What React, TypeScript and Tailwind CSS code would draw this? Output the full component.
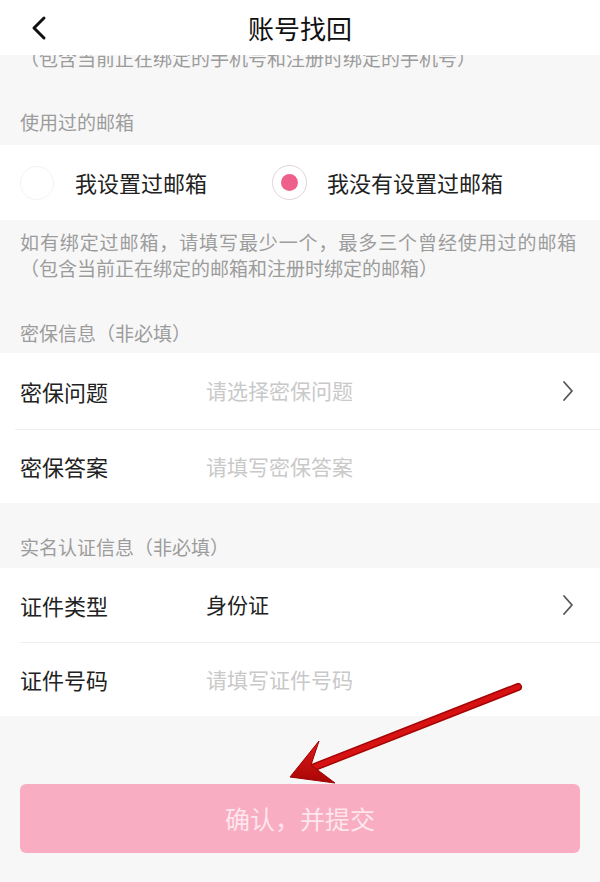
import React from "react";

const font = "font-['Noto_Sans_CJK_SC','Noto_Sans',sans-serif]";

const Chevron = () => (
  <svg width="12" height="22" viewBox="0 0 12 22" fill="none">
    <path d="M2 2 L10 11 L2 20" stroke="#555" strokeWidth="1.8" strokeLinecap="round" strokeLinejoin="round" />
  </svg>
);

const Row = ({ label, value, placeholder, arrow }: { label: string; value?: string; placeholder?: string; arrow?: boolean }) => (
  <div className="flex h-full items-center px-[20px]">
    <span className="w-[186px] text-[22px] text-[#222]">{label}</span>
    {value ? (
      <span className="flex-1 text-[21px] text-[#222]">{value}</span>
    ) : (
      <span className="flex-1 text-[21px] text-[#c9c9c9]">{placeholder}</span>
    )}
    {arrow && (
      <span className="mr-[6px] flex items-center">
        <Chevron />
      </span>
    )}
  </div>
);

const Heading = ({ children }: { children: React.ReactNode }) => (
  <div className="text-[19px] leading-[26px] text-[#9c9c9c]">{children}</div>
);

export default function App() {
  return (
    <div className={`relative h-[882px] w-[600px] overflow-hidden bg-[#f7f7f7] ${font}`}>
      {/* header */}
      <div className="relative z-10 grid h-[55px] grid-cols-[80px_1fr_80px] items-center bg-white">
        <div className="flex items-center pl-[30px]">
          <svg width="18" height="26" viewBox="0 0 18 26" fill="none">
            <path d="M14 3 L4 13 L14 23" stroke="#111" strokeWidth="3" strokeLinecap="round" strokeLinejoin="round" />
          </svg>
        </div>
        <div className="text-center text-[26px] text-[#111]">账号找回</div>
        <div />
      </div>

      {/* scrolled content: previous hint line is partly hidden under the header */}
      <div className="h-[90px] overflow-hidden px-[20px]">
        <div className="-mt-[10px] text-[19px] leading-[26px] text-[#9c9c9c]">
          （包含当前正在绑定的手机号和注册时绑定的手机号）
        </div>
        <div className="mt-[38px]">
          <Heading>使用过的邮箱</Heading>
        </div>
      </div>

      <div className="flex h-[75px] items-center bg-white px-[20px]">
        <div className="flex w-[252px] items-center gap-[21px]">
          <span className="h-[34px] w-[34px] rounded-full border border-[#f3f3f3]" />
          <span className="text-[22px] text-[#222]">我设置过邮箱</span>
        </div>
        <div className="flex items-center gap-[20px]">
          <span className="flex h-[35px] w-[35px] items-center justify-center rounded-full border border-[#e2d4d8]">
            <span className="h-[17px] w-[17px] rounded-full bg-[#ef5f8c]" />
          </span>
          <span className="text-[22px] text-[#222]">我没有设置过邮箱</span>
        </div>
      </div>

      <div className="h-[133px] px-[20px] pt-[9px]">
        <div className="text-[19px] leading-[26px] tracking-[0.9px] text-[#9c9c9c]">
          如有绑定过邮箱，请填写最少一个，最多三个曾经使用过的邮箱
        </div>
        <div className="text-[19px] leading-[26px] text-[#9c9c9c]">（包含当前正在绑定的邮箱和注册时绑定的邮箱）</div>
        <div className="mt-[39px]">
          <Heading>密保信息（非必填）</Heading>
        </div>
      </div>

      <div className="bg-white">
        <div className="h-[76px]">
          <Row label="密保问题" placeholder="请选择密保问题" arrow />
        </div>
        <div className="ml-[15px] h-px bg-[#efefef]" />
        <div className="h-[73px]">
          <Row label="密保答案" placeholder="请填写密保答案" />
        </div>
      </div>

      <div className="h-[65px] px-[20px] pt-[31px]">
        <Heading>实名认证信息（非必填）</Heading>
      </div>

      <div className="bg-white">
        <div className="h-[74px]">
          <Row label="证件类型" value="身份证" arrow />
        </div>
        <div className="ml-[20px] h-px bg-[#efefef]" />
        <div className="h-[73px]">
          <Row label="证件号码" placeholder="请填写证件号码" />
        </div>
      </div>

      <div className="px-[20px] pt-[68px]">
        <button className="flex h-[69px] w-full items-center justify-center rounded-[6px] bg-[#f9adc2] text-[25px] text-[#fde6ed]">
          确认，并提交
        </button>
      </div>

      {/* red annotation arrow */}
      <svg className="pointer-events-none absolute left-0 top-0" width="600" height="882" viewBox="0 0 600 882">
        <defs>
          <linearGradient id="arrowRed" x1="0" y1="0" x2="0" y2="1">
            <stop offset="0" stopColor="#e01818" />
            <stop offset="1" stopColor="#a80606" />
          </linearGradient>
        </defs>
        <line x1="518" y1="687" x2="312" y2="768" stroke="#a50505" strokeWidth="8" strokeLinecap="round" />
        <line x1="518" y1="687" x2="312" y2="768" stroke="#d81212" strokeWidth="5" strokeLinecap="round" />
        <polygon points="290,777 319,741 311,765 335,783" fill="url(#arrowRed)" stroke="#9a0404" strokeWidth="1" strokeLinejoin="round" />
      </svg>
    </div>
  );
}
